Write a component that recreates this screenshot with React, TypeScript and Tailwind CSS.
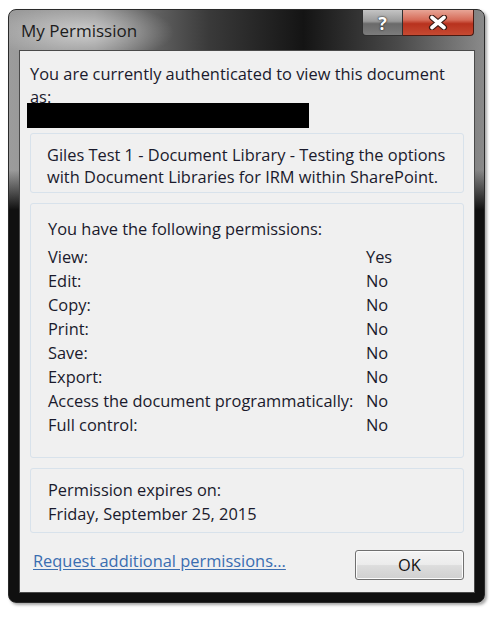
import React from 'react';

const perms: [string, string][] = [
  ['View:', 'Yes'],
  ['Edit:', 'No'],
  ['Copy:', 'No'],
  ['Print:', 'No'],
  ['Save:', 'No'],
  ['Export:', 'No'],
  ['Access the document programmatically:', 'No'],
  ['Full control:', 'No'],
];

const GroupBox: React.FC<{ className?: string; children: React.ReactNode }> = ({ className = '', children }) => (
  <div className={`mx-[10px] rounded-[3px] border border-[#d8e2eb] bg-[#f0f0f0] ${className}`}>{children}</div>
);

export default function App() {
  return (
    <div className="h-[617px] w-[499px] bg-white pl-[8px] pt-[9px] font-['Open_Sans',sans-serif] text-[#1a1a2c]">
      <div className="relative flex h-[594px] w-[477px] flex-col rounded-[8px] border border-[#2a2a2a] bg-[radial-gradient(ellipse_90px_30px_at_75px_22px,rgba(255,255,255,0.55),transparent),linear-gradient(to_bottom,transparent_0px,transparent_160px,#101010_200px,#101010_100%),linear-gradient(to_right,#9c9c9c_0%,#8e8e8e_18%,#3a3a3a_42%,#141414_62%,#4a4a4a_82%,#8a8a8a_100%)] shadow-[2px_2px_3px_rgba(0,0,0,0.35)]">
        {/* title bar */}
        <div className="flex h-[40px] shrink-0 items-start justify-between">
          <div className="pl-[12px] pt-[11px] text-[17px] leading-[20px] text-[#1c1c1c]">My Permission</div>
          <div className="mr-[10px] flex">
            <div className="flex h-[26px] w-[41px] items-center justify-center rounded-bl-[4px] border border-t-0 border-[#303030] bg-[linear-gradient(to_bottom,#c4c4c4_0%,#9a9a9a_45%,#6a6a6a_55%,#7c7c7c_100%)] text-[18px] font-bold leading-none text-white [text-shadow:0_0_2px_#222,0_0_1px_#222]">
              ?
            </div>
            <div className="flex h-[26px] w-[71px] items-center justify-center rounded-br-[4px] border border-l-0 border-t-0 border-[#4a1a12] bg-[linear-gradient(to_bottom,#e8a596_0%,#d66b58_40%,#b8321e_55%,#c64a32_100%)]">
              <svg width="20" height="15" viewBox="0 0 20 15">
                <path d="M4 2.5 L16 12.5 M16 2.5 L4 12.5" stroke="#3a1a14" strokeWidth="6" strokeLinecap="round" />
                <path d="M4 2.5 L16 12.5 M16 2.5 L4 12.5" stroke="#ffffff" strokeWidth="3.6" strokeLinecap="round" />
              </svg>
            </div>
          </div>
        </div>

        {/* client area */}
        <div className="mb-[9px] ml-[10px] mr-[9px] flex flex-1 flex-col border border-[#4a4a4a] bg-[#f0f0f0] text-[16.4px] font-medium leading-[20px]">
          <div className="px-[10px] pt-[11px]">
            <p className="leading-[23px]">You are currently authenticated to view this document</p>
            <p className="leading-[23px]">as:</p>
            <div className="ml-[-3px] mt-[-5px] h-[25px] w-[282px] bg-black" />
          </div>

          <GroupBox className="mt-[5px] whitespace-nowrap px-[16px] pb-[4px] pt-[10px] leading-[22px]">
            <p>Giles Test 1 - Document Library - Testing the options</p>
            <p>with Document Libraries for IRM within SharePoint.</p>
          </GroupBox>

          <GroupBox className="mt-[10px] px-[17px] pb-[20px] pt-[14px]">
            <p className="mb-[5px] leading-[22px]">You have the following permissions:</p>
            <div className="grid grid-cols-[318px_auto]">
              {perms.map(([label, value]) => (
                <React.Fragment key={label}>
                  <div className="leading-[24px]">{label}</div>
                  <div className="leading-[24px]">{value}</div>
                </React.Fragment>
              ))}
            </div>
          </GroupBox>

          <GroupBox className="mt-[10px] px-[17px] pb-[6px] pt-[9px] leading-[24px]">
            <p>Permission expires on:</p>
            <p>Friday, September 25, 2015</p>
          </GroupBox>

          <div className="mt-[17px] flex items-start justify-between pl-[13px] pr-[10px]">
            <a href="#" className="mt-[1px] text-[#3a6db0] underline underline-offset-2">
              Request additional permissions...
            </a>
            <button className="h-[30px] w-[109px] rounded-[3px] border border-[#707070] bg-[linear-gradient(to_bottom,#f4f4f4_0%,#ececec_48%,#dddddd_52%,#d0d0d0_100%)] text-[16.4px] text-[#141414] shadow-[inset_0_0_0_1px_#fcfcfc]">
              OK
            </button>
          </div>
        </div>
      </div>
    </div>
  );
}
